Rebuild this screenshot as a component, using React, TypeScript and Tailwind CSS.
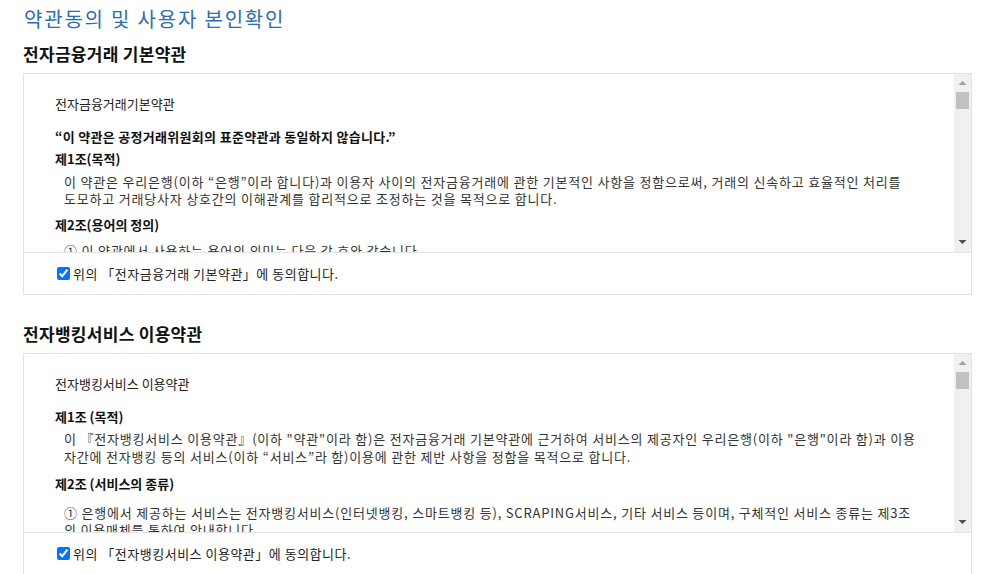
import React from 'react'

function ScrollBar() {
  return (
    <div className="relative w-[17px] shrink-0 bg-[#f0f0f0]">
      <svg className="absolute left-[4px] top-[6px]" width="9" height="6" viewBox="0 0 9 6">
        <path d="M0.5 5 L4.5 1 L8.5 5 Z" fill="#a3a3a3" />
      </svg>
      <div className="absolute left-[2px] top-[18px] h-[17px] w-[13px] bg-[#c1c1c1]" />
      <svg className="absolute left-[4px] bottom-[7px]" width="9" height="6" viewBox="0 0 9 6">
        <path d="M0.5 1 L4.5 5 L8.5 1 Z" fill="#505050" />
      </svg>
    </div>
  )
}

interface TermsBoxProps {
  title: string
  agree: string
  children: React.ReactNode
}

function TermsBox({ title, agree, children }: TermsBoxProps) {
  return (
    <section>
      <h2 className="text-[17px] leading-[24px] font-bold tracking-[0.3px] text-[#111]">{title}</h2>
      <div className="mt-[7px] border border-[#e3e3e3]">
        <div className="flex h-[178px]">
          <div className="flex-1 overflow-hidden pl-[31px] pr-[31px] text-[13px] leading-[17px] text-[#333]">
            {children}
          </div>
          <ScrollBar />
        </div>
        <label className="flex h-[42px] items-center gap-[3px] border-t border-[#e3e3e3] pl-[33px] text-[13px] tracking-[0.5px] text-[#222]">
          <input type="checkbox" defaultChecked className="m-0 h-[13px] w-[13px]" />
          <span>{agree}</span>
        </label>
      </div>
    </section>
  )
}

export default function App() {
  return (
    <div className="min-h-screen bg-white px-[23px] pt-[5px] font-['Malgun_Gothic','Noto_Sans_CJK_KR',sans-serif]">
      <h1 className="pl-[1px] text-[20px] leading-[28px] tracking-[1.8px] text-[#2c6db5]">
        약관동의 및 사용자 본인확인
      </h1>

      <div className="mt-[9px]">
        <TermsBox title="전자금융거래 기본약관" agree="위의 「전자금융거래 기본약관」에 동의합니다.">
          <p className="pt-[21px] text-[#222]">전자금융거래기본약관</p>
          <p className="mt-[16px] font-bold tracking-[0.3px] text-[#111]">“이 약관은 공정거래위원회의 표준약관과 동일하지 않습니다.”</p>
          <p className="mt-[5px] font-bold text-[#111]">제1조(목적)</p>
          <p className="mt-[6px] pl-[9px] tracking-[0.8px] break-keep">
            이 약관은 우리은행(이하 “은행”이라 합니다)과 이용자 사이의 전자금융거래에 관한 기본적인 사항을 정함으로써, 거래의 신속하고 효율적인 처리를 도모하고 거래당사자 상호간의 이해관계를 합리적으로 조정하는 것을 목적으로 합니다.
          </p>
          <p className="mt-[9px] font-bold text-[#111]">제2조(용어의 정의)</p>
          <p className="mt-[9px] pl-[9px] tracking-[0.8px]">① 이 약관에서 사용하는 용어의 의미는 다음 각 호와 같습니다.</p>
          <p className="pl-[9px] tracking-[0.8px]">1. “전자금융거래”라 함은 은행이 전자적 장치를 통하여 제공하는 금융상품 및 서비스를 이용자가 이용하는 거래를 말합니다.</p>
        </TermsBox>
      </div>

      <div className="mt-[27px]">
        <TermsBox title="전자뱅킹서비스 이용약관" agree="위의 「전자뱅킹서비스 이용약관」에 동의합니다.">
          <p className="pt-[21px] text-[#222]">전자뱅킹서비스 이용약관</p>
          <p className="mt-[16px] font-bold text-[#111]">제1조 (목적)</p>
          <p className="mt-[5px] pl-[9px] leading-[18px] tracking-[0.8px]">
            이 『전자뱅킹서비스 이용약관』(이하 "약관"이라 함)은 전자금융거래 기본약관에 근거하여 서비스의 제공자인 우리은행(이하 "은행"이라 함)과 이용자간에 전자뱅킹 등의 서비스(이하 “서비스”라 함)이용에 관한 제반 사항을 정함을 목적으로 합니다.
          </p>
          <p className="mt-[9px] font-bold text-[#111]">제2조 (서비스의 종류)</p>
          <p className="mt-[12px] pl-[9px] tracking-[0.8px]">
            ① 은행에서 제공하는 서비스는 전자뱅킹서비스(인터넷뱅킹, 스마트뱅킹 등), SCRAPING서비스, 기타 서비스 등이며, 구체적인 서비스 종류는 제3조의 이용매체를 통하여 안내합니다.
          </p>
        </TermsBox>
      </div>
    </div>
  )
}
